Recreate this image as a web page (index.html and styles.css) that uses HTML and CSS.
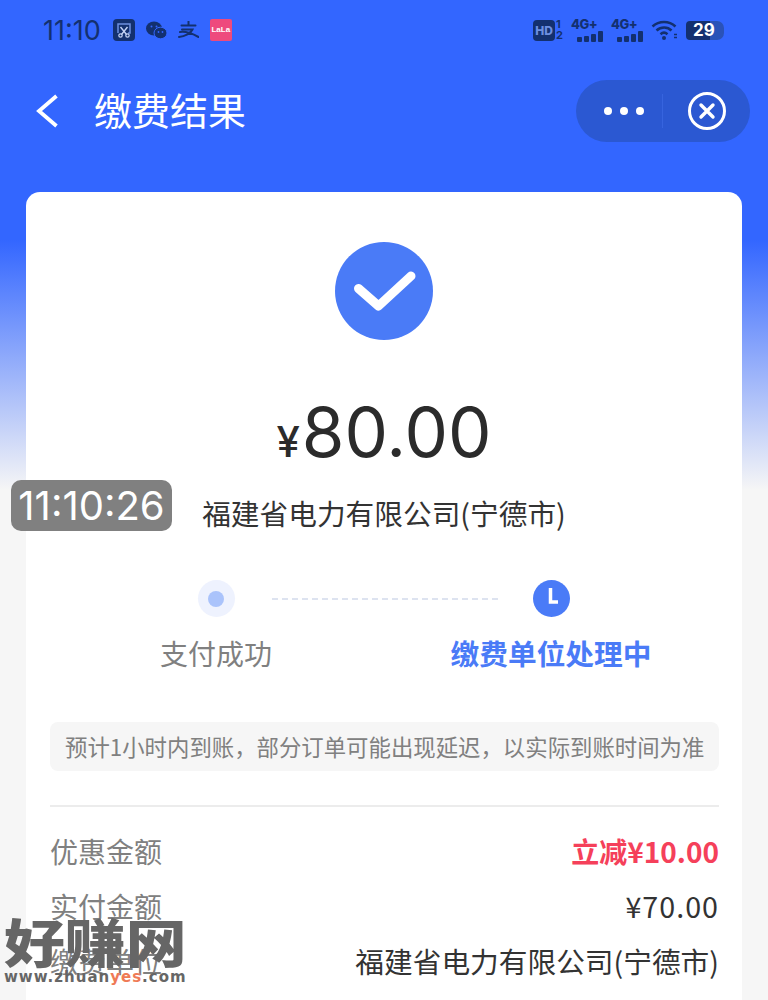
FILE: index.html
```html
<!DOCTYPE html>
<html lang="zh-CN">
<head>
    <meta charset="UTF-8">
    <meta name="viewport" content="width=device-width, initial-scale=1.0">
    <title>缴费结果</title>
    <link rel="stylesheet" href="styles.css">
</head>
<body>
    <div class="page">
        <div class="status-bar">
            <div class="status-left">
                <span class="clock">11:10</span>
                <svg class="app-icon" width="22" height="22" viewBox="0 0 22 22">
                    <rect width="22" height="22" rx="4" fill="#13306f"/>
                    <path d="M5 14V5h12v9h-2" fill="none" stroke="#6d8fe0" stroke-width="1.5"/>
                    <path d="M7.500 8l6 7.500M14.500 8l-6 7.500" fill="none" stroke="#c4d3f5" stroke-width="1.4"/>
                    <circle cx="7.500" cy="16.500" r="1.700" fill="none" stroke="#c4d3f5" stroke-width="1.200"/>
                    <circle cx="14.500" cy="16.500" r="1.700" fill="none" stroke="#c4d3f5" stroke-width="1.200"/>
                </svg>
                <svg class="app-icon wechat" width="21" height="19" viewBox="0 0 21 19">
                    <ellipse cx="8" cy="7.500" rx="8" ry="7" fill="#13306f"/>
                    <ellipse cx="14.500" cy="12" rx="6.500" ry="5.800" fill="#13306f" stroke="#3366ff" stroke-width="1"/>
                    <circle cx="5.500" cy="5.500" r="1" fill="#3366ff"/>
                    <circle cx="10.500" cy="5.500" r="1" fill="#3366ff"/>
                    <circle cx="12.500" cy="11" r="0.900" fill="#3366ff"/>
                    <circle cx="16.500" cy="11" r="0.900" fill="#3366ff"/>
                </svg>
                <svg class="app-icon alipay" width="21" height="18" viewBox="0 0 21 18">
                    <path d="M3.500 4.500h14M10.500 0.500v4M4 8.500h10.500C13 12 7 15.500 1 16M2 11c7-1 13 2 18.500 5" fill="none" stroke="#13306f" stroke-width="2" stroke-linecap="round"/>
                </svg>
                <span class="lala">LaLa</span>
            </div>
            <div class="status-right">
                <div class="hd">
                    <span class="hd-box">HD</span>
                    <span class="sim-nums"><span>1</span><span>2</span></span>
                </div>
                <div class="signal">
                    <span class="net">4G+</span>
                    <div class="bars"><i class="b1"></i><i class="b2"></i><i class="b3"></i><i class="b4"></i></div>
                </div>
                <div class="signal">
                    <span class="net">4G+</span>
                    <div class="bars"><i class="b1"></i><i class="b2"></i><i class="b3"></i><i class="b4"></i></div>
                </div>
                <svg class="wifi" width="27" height="20" viewBox="0 0 27 20">
                    <path d="M1.500 6.500c6.500-6 16.500-6 23 0M5.500 10.500c4.500-4 11-4 15 0M9.500 14.200c2.300-2 4.700-2 7 0" fill="none" stroke="#13306f" stroke-width="2.600"/>
                    <circle cx="13" cy="18" r="2" fill="#13306f"/>
                    <path d="M23 14.500h3M23 17.500h3" stroke="#13306f" stroke-width="1.500"/>
                </svg>
                <div class="battery"><span class="battery-num">29</span></div>
            </div>
        </div>

        <div class="nav">
            <div class="nav-left">
                <svg class="back" width="24" height="34" viewBox="0 0 24 34">
                    <path d="M21.500 2L4 17l17.500 15" fill="none" stroke="#fff" stroke-width="3.800"/>
                </svg>
                <h1 class="nav-title">缴费结果</h1>
            </div>
            <div class="capsule">
                <div class="dots"><i></i><i></i><i></i></div>
                <div class="capsule-line"></div>
                <svg class="close" width="40" height="40" viewBox="0 0 40 40">
                    <circle cx="20" cy="20" r="17.500" fill="none" stroke="#fff" stroke-width="3"/>
                    <path d="M14 14l12 12M26 14L14 26" stroke="#fff" stroke-width="3.400" stroke-linecap="round"/>
                </svg>
            </div>
        </div>

        <div class="card">
            <svg class="ok-icon" width="98" height="98" viewBox="0 0 98 98">
                <circle cx="49" cy="49" r="49" fill="#4a7bf7"/>
                <path d="M23.500 46.500L43.500 64L76 34" fill="none" stroke="#fff" stroke-width="9" stroke-linecap="round" stroke-linejoin="round"/>
            </svg>
            <div class="amount"><span class="yen">¥</span>80.00</div>
            <div class="company">福建省电力有限公司(宁德市)</div>

            <div class="steps">
                <div class="step">
                    <div class="dot-wrap"><span class="dot-done"></span></div>
                    <div class="step-name">支付成功</div>
                </div>
                <div class="dash"></div>
                <div class="step step-last">
                    <svg class="clock-icon" width="37" height="37" viewBox="0 0 37 37">
                        <circle cx="18.500" cy="18.500" r="18.500" fill="#4a7bf7"/>
                        <path d="M17.500 8v14h7.500" fill="none" stroke="#fff" stroke-width="3.500"/>
                    </svg>
                    <div class="step-name active">缴费单位处理中</div>
                </div>
            </div>

            <div class="notice">预计1小时内到账，部分订单可能出现延迟，以实际到账时间为准</div>

            <div class="rows">
                <div class="row">
                    <span class="row-label">优惠金额</span>
                    <span class="row-value discount">立减¥10.00</span>
                </div>
                <div class="row">
                    <span class="row-label">实付金额</span>
                    <span class="row-value price">¥70.00</span>
                </div>
                <div class="row">
                    <span class="row-label">缴费单位</span>
                    <span class="row-value">福建省电力有限公司(宁德市)</span>
                </div>
            </div>
        </div>

        <div class="time-badge">11:10:26</div>
        <div class="watermark">
            <div class="wm-name">好赚网</div>
            <div class="wm-url">www.zhuan<span class="wm-yes">yes</span>.com</div>
        </div>
    </div>
</body>
</html>
```

FILE: styles.css
```css
* {
    box-sizing: border-box;
}

body {
    margin: 0;
    font-family: "Noto Sans CJK SC", "Noto Sans", sans-serif;
    color: #333;
}

.page {
    position: relative;
    width: 768px;
    height: 1000px;
    overflow: hidden;
    padding: 0 26px;
    background: linear-gradient(#3366ff 0, #3366ff 240px, #f6f6f6 490px);
}

/* status bar */
.status-bar {
    display: flex;
    justify-content: space-between;
    align-items: center;
    height: 60px;
    padding: 0 18px 0 17px;
}

.status-left,
.status-right {
    display: flex;
    align-items: center;
}

.clock {
    font-family: "Inter", sans-serif;
    font-size: 27px;
    color: #13306f;
    margin-right: 12px;
}

.app-icon {
    margin-right: 11px;
}

.lala {
    width: 22px;
    height: 22px;
    background: #ee4a7d;
    color: #fff;
    font-family: "Liberation Sans", sans-serif;
    font-size: 8px;
    font-weight: bold;
    line-height: 22px;
    text-align: center;
    border-radius: 2px;
}

.status-right {
    gap: 8px;
}

.hd {
    display: flex;
    align-items: center;
    gap: 1px;
}

.hd-box {
    width: 22px;
    height: 21px;
    border-radius: 4px;
    background: #13306f;
    color: #6d8fe0;
    font-family: "Inter", sans-serif;
    font-size: 12px;
    font-weight: 800;
    line-height: 21px;
    text-align: center;
}

.sim-nums {
    display: flex;
    flex-direction: column;
    width: 7px;
    font-family: "Inter", sans-serif;
    font-size: 11px;
    font-weight: 700;
    line-height: 11px;
    color: #13306f;
}

.signal {
    display: flex;
    flex-direction: column;
    width: 32px;
    height: 24px;
}

.net {
    font-family: "Inter", sans-serif;
    font-size: 13px;
    font-weight: 800;
    line-height: 12px;
    letter-spacing: -0.5px;
    color: #13306f;
}

.bars {
    display: flex;
    align-items: flex-end;
    justify-content: flex-end;
    gap: 2px;
    height: 12px;
}

.bars i {
    width: 5px;
    background: #13306f;
    border-radius: 1px;
}

.b1 { height: 5px; }
.b2 { height: 6px; }
.b3 { height: 8px; }
.b4 { height: 11px; }

.battery {
    width: 38px;
    height: 19px;
    border-radius: 4px 7px 7px 4px;
    background: linear-gradient(90deg, #13306f 0, #13306f 62%, #2a52b8 62%);
}

.battery-num {
    display: block;
    font-family: "Inter", sans-serif;
    font-size: 17px;
    font-weight: 700;
    line-height: 19px;
    color: #fff;
    padding-left: 7px;
}

/* nav */
.nav {
    display: flex;
    justify-content: space-between;
    align-items: center;
    height: 62px;
    margin: 20px 0 50px;
}

.nav-left {
    display: flex;
    align-items: center;
}

.back {
    margin: 0 35px 0 9px;
}

.nav-title {
    margin: 0 0 4px;
    font-size: 38px;
    font-weight: 400;
    line-height: 50px;
    color: #fff;
}

.capsule {
    display: flex;
    align-items: center;
    width: 174px;
    height: 62px;
    margin-right: -8px;
    padding-left: 28px;
    border-radius: 31px;
    background: #2b58d2;
}

.dots {
    display: flex;
    gap: 8px;
}

.dots i {
    width: 8px;
    height: 8px;
    background: #fff;
    border-radius: 50%;
}

.capsule-line {
    width: 1px;
    height: 34px;
    margin: 0 24px 0 18px;
    background: #3764de;
}

/* card */
.card {
    height: 900px;
    padding: 50px 24px 0;
    background: #fff;
    border-radius: 14px 14px 0 0;
    text-align: center;
}

.ok-icon {
    display: block;
    margin: 0 auto;
}

.amount {
    margin-top: 46px;
    font-family: "Inter", sans-serif;
    font-size: 69px;
    line-height: 92px;
    color: #2b2b2b;
}

.yen {
    font-size: 42px;
    font-weight: 500;
    margin-right: 2px;
}

.company {
    margin-top: 4px;
    font-size: 28.7px;
    line-height: 42px;
    color: #333;
}

.steps {
    display: flex;
    align-items: flex-start;
    margin-top: 46px;
    padding-left: 110px;
}

.step {
    display: flex;
    flex-direction: column;
    align-items: center;
    width: 112px;
}

.step-last {
    width: 106px;
}

.dot-wrap {
    display: flex;
    align-items: center;
    justify-content: center;
    width: 37px;
    height: 37px;
    border-radius: 50%;
    background: #eef2fe;
}

.dot-done {
    width: 16px;
    height: 16px;
    border-radius: 50%;
    background: #aac3fb;
}

.clock-icon {
    display: block;
}

.step-name {
    margin-top: 15px;
    font-size: 28px;
    line-height: 42px;
    color: #808080;
    white-space: nowrap;
}

.step-name.active {
    font-size: 28.7px;
    color: #4a7bf7;
    font-weight: 700;
}

.dash {
    width: 226px;
    margin-top: 18px;
    border-top: 2px dashed #dde3f0;
}

.notice {
    height: 49px;
    margin: 48px -1px 0 0;
    background: #f6f6f6;
    border-radius: 8px;
    font-size: 22.4px;
    line-height: 49px;
    color: #808080;
    white-space: nowrap;
    text-align: left;
    padding-left: 15px;
}

.rows {
    margin: 34px -1px 0 0;
    padding-top: 16px;
    border-top: 2px solid #ececec;
}

.row {
    display: flex;
    justify-content: space-between;
    align-items: center;
    height: 55px;
    font-size: 28.7px;
}

.row-label {
    font-size: 28px;
    color: #808080;
}

.row-value {
    color: #333;
}

.price {
    letter-spacing: 1px;
}

.discount {
    font-size: 28px;
    color: #f5405a;
    font-weight: 700;
}

/* overlays */
.time-badge {
    position: absolute;
    left: 11px;
    top: 480px;
    width: 161px;
    height: 51px;
    border-radius: 10px;
    background: #808080;
    font-family: "Inter", sans-serif;
    font-size: 40px;
    line-height: 51px;
    text-align: center;
    color: #fff;
}

.watermark {
    position: absolute;
    left: 4px;
    top: 914px;
    width: 186px;
}

.wm-name {
    font-size: 52px;
    font-weight: 900;
    line-height: 54px;
    color: #666;
    white-space: nowrap;
    transform: scaleX(1.17);
    transform-origin: left center;
}

.wm-url {
    font-family: "DejaVu Sans", sans-serif;
    font-size: 15px;
    font-weight: 700;
    line-height: 18px;
    letter-spacing: 1px;
    color: #666;
    white-space: nowrap;
}

.wm-yes {
    color: #ef7a55;
}
```
